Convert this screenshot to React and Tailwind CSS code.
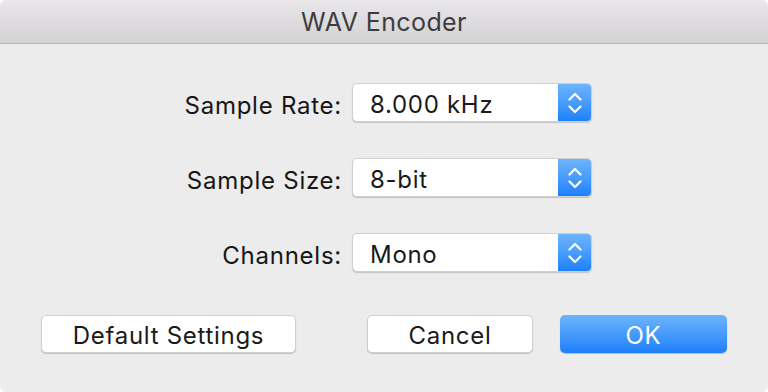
import React from "react";

const font = { fontFamily: 'Inter, "Liberation Sans", Arial, sans-serif' };

function Chevrons() {
  return (
    <svg width="14" height="24" viewBox="0 0 14 24" fill="none">
      <path d="M1.5 8.5 L7 3 L12.5 8.5" stroke="white" strokeWidth="2.2" strokeLinecap="round" strokeLinejoin="round" />
      <path d="M1.5 15.5 L7 21 L12.5 15.5" stroke="white" strokeWidth="2.2" strokeLinecap="round" strokeLinejoin="round" />
    </svg>
  );
}

function Popup({ value }) {
  return (
    <div className="flex h-[39px] w-[240px] items-stretch rounded-[5px] border border-[#cfcfcf] bg-white shadow-[0_1px_1px_rgba(0,0,0,0.18)]">
      <div className="flex flex-1 items-center pl-[17px] pt-[4px] text-[24px] tracking-[0.7px] text-[#1a1a1a]">{value}</div>
      <div className="flex w-[33px] items-center justify-center rounded-r-[4px] bg-gradient-to-b from-[#6db5fb] to-[#1a81fb]">
        <Chevrons />
      </div>
    </div>
  );
}

export default function App() {
  return (
    <div className="h-[392px] w-[768px] bg-white" style={font}>
      <div className="flex h-full w-full flex-col overflow-hidden rounded-[6px] bg-[#ececec]">
        <div className="flex h-[44px] items-center justify-center border-b border-[#b3b3b3] bg-gradient-to-b from-[#e9e7e9] to-[#d3d1d3] pt-[2px] text-[25px] tracking-[0.4px] text-[#3c3c3c]">
          WAV Encoder
        </div>
        <div className="grid grid-cols-[330px_240px] items-center gap-x-[10px] gap-y-[36px] pt-[39px] pl-[12px] text-[24px] tracking-[0.75px] text-[#161616]">
          <div className="pt-[6px] text-right leading-[32px]">Sample Rate:</div>
          <Popup value="8.000 kHz" />
          <div className="pt-[6px] text-right leading-[32px]">Sample Size:</div>
          <Popup value="8-bit" />
          <div className="pt-[6px] text-right leading-[32px]">Channels:</div>
          <Popup value="Mono" />
        </div>
        <div className="mt-[43px] flex items-center px-[41px] text-[24px] tracking-[0.7px]">
          <div className="flex h-[38px] w-[255px] items-center justify-center rounded-[5px] border border-[#cfcfcf] bg-white pt-[3px] text-[#1a1a1a] shadow-[0_1px_1px_rgba(0,0,0,0.18)]">
            Default Settings
          </div>
          <div className="flex-1" />
          <div className="flex h-[38px] w-[166px] items-center justify-center rounded-[5px] border border-[#cfcfcf] bg-white pt-[3px] text-[#1a1a1a] shadow-[0_1px_1px_rgba(0,0,0,0.18)]">
            Cancel
          </div>
          <div className="ml-[27px] flex h-[38px] w-[167px] items-center justify-center rounded-[5px] bg-gradient-to-b from-[#6cb4fb] to-[#1a7ffb] pt-[3px] text-white shadow-[0_1px_1px_rgba(0,0,0,0.2)]">
            OK
          </div>
        </div>
      </div>
    </div>
  );
}
